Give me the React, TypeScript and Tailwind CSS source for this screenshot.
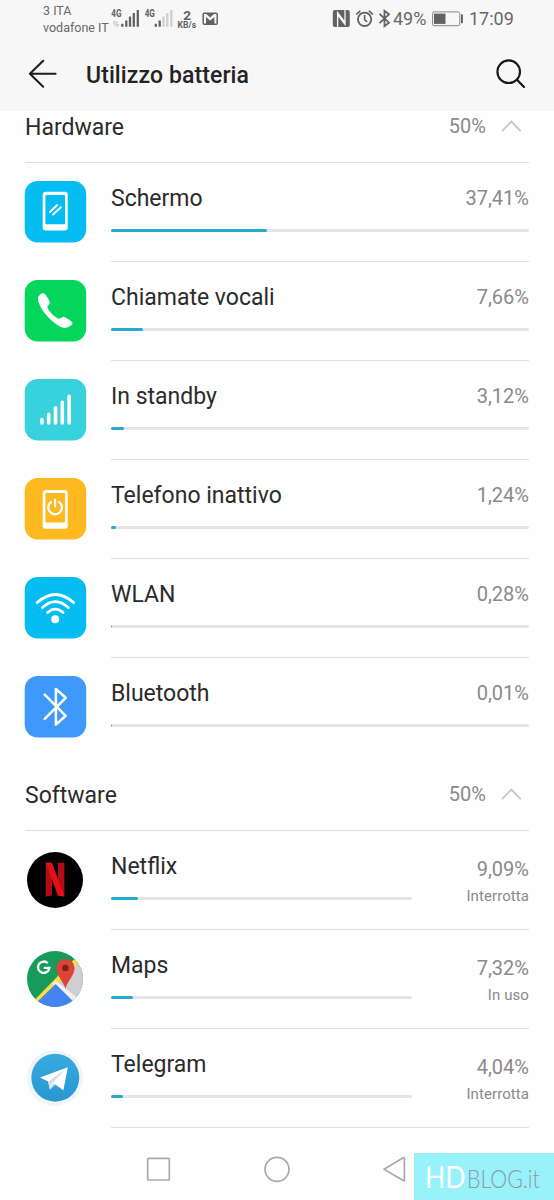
import type { ReactNode } from 'react';

type Item = {
  name: string;
  value: number;
  label: string;
  status?: string;
  icon: ReactNode;
};

function Tile({ color, children }: { color: string; children: ReactNode }) {
  return (
    <svg width="63" height="62" viewBox="-0.7 0 63 62" fill="none">
      <rect width="61.5" height="61.5" rx="13" fill={color} />
      {children}
    </svg>
  );
}

const screenIcon = (
  <Tile color="#05bdf1">
    <rect x="18" y="10.7" width="25" height="38.8" rx="3" fill="#fff" />
    <rect x="20.7" y="14" width="19.7" height="29.2" rx="0.8" fill="#05bdf1" />
    <path d="M25.3 31 32.5 24M28.3 33.5 36.2 26.3" stroke="#fff" strokeWidth="1.9" strokeLinecap="round" />
  </Tile>
);

const callIcon = (
  <Tile color="#04d65b">
    <path
      d="M18.2 13C16.2 13.4 13.5 16 13.2 18C13 21 16 29 22 35.6C28 42.2 35 47.6 39.5 48C42.5 48 47.4 45.6 47.9 43.5C48 42.3 46 41 42.5 38.6L39.6 36.9C38.2 36.4 36.2 38.6 34 38.8C30 37 24 31 22.6 27.4C22.6 26 25.2 24 25.1 22.4C24.6 20 20.5 13 18.2 13Z"
      fill="#fff"
    />
  </Tile>
);

const standbyIcon = (
  <Tile color="#38d2dc">
    <path
      d="M17.2 40.6V43.9M24 35.4V43.9M30.8 28.7V43.9M37.6 23.4V43.9M44.5 17.4V43.9"
      stroke="#fff"
      strokeWidth="3.6"
      strokeLinecap="round"
    />
  </Tile>
);

const idleIcon = (
  <Tile color="#fdb91f">
    <rect x="18" y="12" width="25" height="38.8" rx="3" fill="#fff" />
    <rect x="20.7" y="15" width="19.7" height="29.4" rx="0.8" fill="#fdb91f" />
    <path d="M26.3 24.1A6.8 6.8 0 1 0 34.5 24.1M30.4 21.8V28.4" stroke="#fff" strokeWidth="2.2" strokeLinecap="round" />
  </Tile>
);

const wlanIcon = (
  <Tile color="#05bdf1">
    <path
      d="M12.5 25.6Q30.6 9.4 48.9 25.6M17.7 30.6Q30.6 18.6 43.6 30.6M22.8 35.6Q30.6 28.6 38.4 35.6"
      stroke="#fff"
      strokeWidth="2.7"
      strokeLinecap="round"
    />
    <circle cx="30.5" cy="42.2" r="4" fill="#fff" />
  </Tile>
);

const bluetoothIcon = (
  <Tile color="#3e99fb">
    <path
      d="M20 18.7 41 39.8 31.2 48.6V13L41 21.8 20 42.8"
      stroke="#fff"
      strokeWidth="2.5"
      strokeLinecap="round"
      strokeLinejoin="round"
    />
  </Tile>
);

const netflixIcon = (
  <svg width="56" height="56" viewBox="0 0 56 56">
    <circle cx="28" cy="28" r="28" fill="#000" />
    <path d="M18.7 10.8H25V43.6L18.7 44.5ZM31 10.8H37.4V44.5L31 43.6Z" fill="#b20d16" />
    <path d="M18.7 10.8H25L37.4 44.5Q34 43.7 31 43.7Z" fill="#e21018" />
  </svg>
);

const mapsIcon = (
  <svg width="56" height="56" viewBox="0 0 56 56">
    <defs>
      <clipPath id="maps-disc">
        <circle cx="28" cy="28" r="28" />
      </clipPath>
    </defs>
    <g clipPath="url(#maps-disc)">
      <rect width="56" height="56" fill="#169b5b" />
      <path d="M56 2 28.5 30 56 56Z" fill="#cfcfcf" />
      <path d="M6 50.5 49 6.5 53 10 12 52Z" fill="#fbdc45" />
      <path d="M28.6 29.5 25.5 33 48 55 54 50Z" fill="#f1f1f1" />
      <path d="M28.6 33 4 57H53Z" fill="#4484f0" />
    </g>
    <path d="M38.4 38C37.3 31 29.3 25 29.3 17A9.1 9.1 0 0 1 47.5 17C47.5 25 39.5 31 38.4 38Z" fill="#dc4437" />
    <circle cx="38.4" cy="16.9" r="3.2" fill="#7c2019" />
    <path d="M20.8 12.2A5.7 5.7 0 1 0 22.4 16.8H16.8" fill="none" stroke="#fff" strokeWidth="2.3" />
  </svg>
);

const telegramIcon = (
  <svg width="56" height="56" viewBox="0 0 56 56">
    <defs>
      <linearGradient id="tg" x1="0" y1="0" x2="0" y2="1">
        <stop offset="0" stopColor="#36abe2" />
        <stop offset="1" stopColor="#2797cf" />
      </linearGradient>
    </defs>
    <circle cx="28" cy="28" r="28" fill="#f0f4f6" />
    <circle cx="28.3" cy="27.7" r="24" fill="url(#tg)" />
    <path d="M21.3 32.5 23 39.6 29.3 34.2Z" fill="#b6c9dc" />
    <path d="M13 27.4 40.8 17.2 36.4 40.2 26.8 33.6 23 39.4 21.2 31.6Z" fill="#fff" />
    <path d="M21.2 31.6 38 19.6 25.3 33.4 23 39.4Z" fill="#d3dfea" />
  </svg>
);

const hardware: Item[] = [
  { name: 'Schermo', value: 37.41, label: '37,41%', icon: screenIcon },
  { name: 'Chiamate vocali', value: 7.66, label: '7,66%', icon: callIcon },
  { name: 'In standby', value: 3.12, label: '3,12%', icon: standbyIcon },
  { name: 'Telefono inattivo', value: 1.24, label: '1,24%', icon: idleIcon },
  { name: 'WLAN', value: 0.28, label: '0,28%', icon: wlanIcon },
  { name: 'Bluetooth', value: 0.12, label: '0,01%', icon: bluetoothIcon },
];

const software: Item[] = [
  { name: 'Netflix', value: 9.09, label: '9,09%', status: 'Interrotta', icon: netflixIcon },
  { name: 'Maps', value: 7.32, label: '7,32%', status: 'In uso', icon: mapsIcon },
  { name: 'Telegram', value: 4.04, label: '4,04%', status: 'Interrotta', icon: telegramIcon },
];

function StatusBar() {
  return (
    <div className="flex h-[37px] items-start text-[#686868]">
      <div className="ml-[43px] mt-[2px] w-[66px] whitespace-nowrap text-[12.5px] leading-[17px]">
        <div>3 ITA</div>
        <div>vodafone IT</div>
      </div>
      {/* signal strength, network speed, mail */}
      <svg width="112" height="37" viewBox="109 0 112 37" fill="none">
        <g fill="#626262" fontFamily="Roboto" fontWeight="700">
          <text x="111.3" y="17.4" fontSize="10.4" textLength="10.2" lengthAdjust="spacingAndGlyphs">4G</text>
          <text x="144.7" y="17.4" fontSize="10.4" textLength="10.2" lengthAdjust="spacingAndGlyphs">4G</text>
          <text x="183.3" y="20.2" fontSize="13.5">2</text>
          <text x="177.6" y="28" fontSize="8.6" textLength="18.5" lengthAdjust="spacingAndGlyphs">KB/s</text>
        </g>
        <path d="M115 26.2V21.4L113.2 23.4M117 21.4V26.2L118.8 24.2" stroke="#c6c6c6" strokeWidth="1.1" />
        <path
          d="M122.3 26.8V23.7M126.3 26.8V20.6M130 26.8V16.6M133.8 26.8V13M137.8 26.8V10M155.8 26.8V23.7M159.7 26.8V20.6"
          stroke="#626262"
          strokeWidth="2.3"
        />
        <path d="M163.5 26.8V16.6M167.3 26.8V13M171.3 26.8V10" stroke="#cfcfcf" strokeWidth="2.3" />
        <rect x="203.2" y="13.3" width="14" height="11" rx="1" stroke="#626262" strokeWidth="1.5" />
        <path d="M206 24.3V17L210.2 20.6 214.4 17V24.3ZM205.5 13.3 210.2 17.4 214.9 13.3Z" fill="#626262" />
      </svg>
      <svg className="ml-[110px]" width="62" height="37" viewBox="331 0 62 37" fill="none">
        <rect x="332.8" y="10" width="17" height="16.9" rx="2" fill="#626262" />
        <path
          d="M337.6 26.9V12.6L345 22.4M345 10V24.4L337.6 14.6"
          stroke="#f7f7f7"
          strokeWidth="1.3"
        />
        <g stroke="#626262" strokeWidth="1.8">
          <circle cx="364.6" cy="19.3" r="6.7" />
          <path d="M364.6 15V19.6L367.2 22M356.3 14.4 360.3 10.9M368.9 10.9 372.9 14.4" strokeWidth="1.6" />
          <path d="M379.5 13.8 389 22.7 384.5 26.2V10.8L389 14.4 379.5 23.2" />
        </g>
      </svg>
      <div className="w-[39px] pt-[2px] text-[18px] leading-[34px]">49%</div>
      <svg width="32" height="37" viewBox="432 0 32 37" fill="none">
        <rect x="432.6" y="11.9" width="27.2" height="13.8" rx="1.6" stroke="#858585" />
        <rect x="434" y="13.6" width="11.5" height="10.3" fill="#626262" />
        <rect x="461" y="14.4" width="1.9" height="8.8" fill="#626262" />
      </svg>
      <div className="ml-[5px] pt-[2px] text-[18px] leading-[34px]">17:09</div>
    </div>
  );
}

function Toolbar() {
  return (
    <div className="flex h-[74px] items-center">
      <svg className="ml-[28px]" width="30" height="30" viewBox="28 59 30 30" fill="none">
        <path d="M43.2 60.8 29.9 73.8 43.2 86.8M30 73.8H55.6" stroke="#1c1c1c" strokeWidth="2" strokeLinecap="round" strokeLinejoin="round" />
      </svg>
      <h1 className="ml-[28px] pt-[3px] text-[23px] font-medium leading-[34px] tracking-[0.1px] text-[#242424]">
        Utilizzo batteria
      </h1>
      <svg className="ml-auto mr-[27px]" width="32" height="32" viewBox="495 58 32 32" fill="none">
        <circle cx="508.7" cy="71.7" r="11.3" stroke="#161616" strokeWidth="2.1" />
        <path d="M517 79.8 524 87" stroke="#161616" strokeWidth="2.2" strokeLinecap="round" />
      </svg>
    </div>
  );
}

function SectionHeader({ title, total }: { title: string; total: string }) {
  return (
    <div className="ml-[25px] mr-[25px] flex h-[74px] items-center border-b border-[#dedede]">
      <h2 className="pt-[4px] text-[23px] leading-[30px] text-[#2b2b2b]">{title}</h2>
      <span className="ml-auto text-[20px] leading-[30px] text-[#8a8a8a]">{total}</span>
      <svg className="ml-[15px] mr-[7px]" width="21" height="14" viewBox="0 0 21 14" fill="none">
        <path d="M1.5 11.6 10.4 2.6 19.3 11.6" stroke="#c6c6c6" strokeWidth="1.8" strokeLinecap="round" />
      </svg>
    </div>
  );
}

function Bar({ value }: { value: number }) {
  return (
    <div className="h-[3px] overflow-hidden rounded-full bg-[#e4e4e4]">
      <div className="h-full rounded-r-full bg-[#25abce]" style={{ width: `${value}%` }} />
    </div>
  );
}

function Row({ item, divider }: { item: Item; divider: boolean }) {
  return (
    <li className="flex h-[99px]">
      <div className="flex h-[98px] w-[111px] shrink-0 pl-[24px]">
        <div className={item.status ? 'pl-[3px] pt-[21px]' : 'pt-[18px]'}>{item.icon}</div>
      </div>
      <div className={`mr-[25px] flex flex-1 border-b ${divider ? 'border-[#dedede]' : 'border-transparent'}`}>
        {item.status ? (
          <>
            <div className="w-[301px] pt-[19px]">
              <div className="mb-[13px] text-[23px] leading-[34px] text-[#2b2b2b]">{item.name}</div>
              <Bar value={item.value} />
            </div>
            <div className="flex-1 pt-[23px] text-right text-[#8a8a8a]">
              <div className="text-[20px] leading-[30px]">{item.label}</div>
              <div className="text-[15px] leading-[24px] tracking-[0.08px]">{item.status}</div>
            </div>
          </>
        ) : (
          <div className="flex-1 pt-[18px]">
            <div className="mb-[13px] flex items-start justify-between">
              <span className="pt-px text-[23px] leading-[34px] text-[#2b2b2b]">{item.name}</span>
              <span className="text-[20px] leading-[34px] text-[#8a8a8a]">{item.label}</span>
            </div>
            <Bar value={item.value} />
          </div>
        )}
      </div>
    </li>
  );
}

function NavBar() {
  return (
    <div className="flex h-[72px] items-center pl-[146px] pt-[10px]">
      <svg width="262" height="30" viewBox="146 1154 262 30" fill="none" stroke="#aaaaaa" strokeWidth="1.7">
        <rect x="147.7" y="1158.4" width="21.6" height="21.6" rx="0.8" />
        <circle cx="277" cy="1169.3" r="12" />
        <path d="M384 1169.2 403.2 1157.8Q404.4 1157.2 404.4 1158.6V1180Q404.4 1181.3 403.2 1180.6Z" strokeLinejoin="round" />
      </svg>
    </div>
  );
}

export default function App() {
  return (
    <div className="relative flex h-[1200px] w-[554px] flex-col overflow-hidden bg-[#fefefe] font-['Roboto',sans-serif]">
      <header className="z-10 h-[111px] shrink-0 bg-[#f7f7f7]">
        <StatusBar />
        <Toolbar />
      </header>

      {/* list is slightly scrolled under the header */}
      <main className="-mt-[22px]">
        <SectionHeader title="Hardware" total="50%" />
        <ul>
          {hardware.map((item, i) => (
            <Row key={item.name} item={item} divider={i < hardware.length - 1} />
          ))}
        </ul>
        <SectionHeader title="Software" total="50%" />
        <ul>
          {software.map((item) => (
            <Row key={item.name} item={item} divider />
          ))}
        </ul>
      </main>

      <NavBar />

      <div className="absolute bottom-0 right-0 h-[47px] w-[140px] bg-[#98f2fb]">
        <svg width="140" height="47" viewBox="0 0 140 47" fontFamily="Lato, sans-serif">
          <text transform="translate(11 35) scale(0.86 1)" fontSize="31" fill="#fff">HD</text>
          <text transform="translate(53 35) scale(0.82 1)" fontSize="26" fontWeight="300" fill="#8d9a9e">BLOG.it</text>
        </svg>
      </div>
    </div>
  );
}
